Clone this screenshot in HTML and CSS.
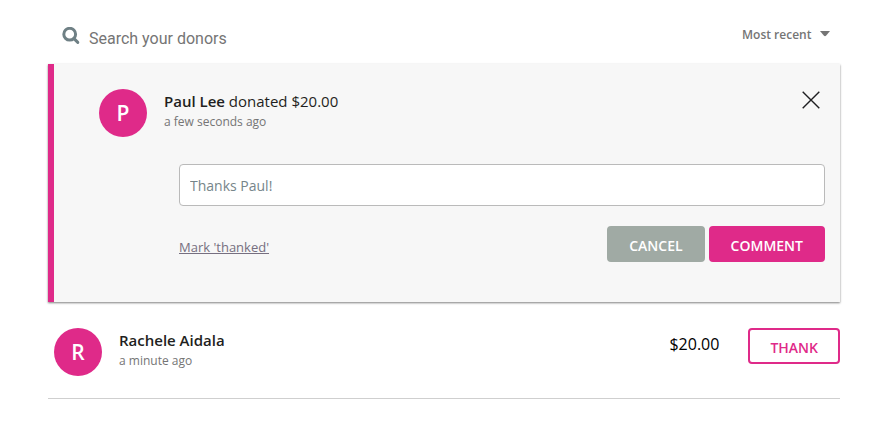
FILE: index.html
```html
<!DOCTYPE html>
<html lang="en">
<head>
<meta charset="utf-8">
<meta name="viewport" content="width=device-width, initial-scale=1">
<title>Donors</title>
<link rel="stylesheet" href="styles.css">
</head>
<body>
<main class="donors">
  <header class="toolbar">
    <label class="search">
      <svg class="search-icon" viewBox="0 0 18 18" aria-hidden="true"><circle cx="7.7" cy="7.2" r="5.9"/><path d="M12 11.6l3.8 3.8"/></svg>
      <input class="search-input" type="search" placeholder="Search your donors" aria-label="Search your donors">
    </label>
    <div class="sort">
      <select class="sort-select" aria-label="Sort donors"><option>Most recent</option></select>
      <svg class="sort-arrow" viewBox="0 0 10 6" aria-hidden="true"><path d="M0 0h10L6 4.8q-1 .9-2 0z"/></svg>
    </div>
  </header>

  <section class="card">
    <div class="card-head">
      <span class="avatar">P</span>
      <div class="who">
        <p class="title"><strong class="name">Paul Lee</strong> donated $20.00</p>
        <p class="time">a few seconds ago</p>
      </div>
      <button class="close" type="button" aria-label="Close">
        <svg class="close-icon" viewBox="0 0 18 18" aria-hidden="true"><path d="M.7.7l16.6 16.6M17.3.7L.7 17.3"/></svg>
      </button>
    </div>
    <form class="reply">
      <input class="reply-input" type="text" placeholder="Thanks Paul!" aria-label="Comment">
      <div class="actions">
        <a class="mark" href="#">Mark 'thanked'</a>
        <div class="buttons">
          <button class="btn btn-cancel" type="button">CANCEL</button>
          <button class="btn btn-primary" type="button">COMMENT</button>
        </div>
      </div>
    </form>
  </section>

  <article class="row">
    <span class="avatar">R</span>
    <div class="who">
      <p class="title"><strong class="name">Rachele Aidala</strong></p>
      <p class="time">a minute ago</p>
    </div>
    <span class="amount">$20.00</span>
    <button class="btn btn-outline" type="button">THANK</button>
  </article>
</main>
</body>
</html>
```
FILE: styles.css
```css
* {
  box-sizing: border-box;
}

body {
  margin: 0;
  background: #fff;
  color: #1f1f21;
  font-family: "Open Sans", "Noto Sans", sans-serif;
}

button,
input,
select {
  font-family: inherit;
}

p {
  margin: 0;
}

.donors {
  padding: 16px 56px 0 48px;
}

.toolbar {
  display: flex;
  justify-content: space-between;
  padding: 0 10px 0 14px;
  height: 48px;
}

.search {
  display: flex;
  flex: 1;
  gap: 9px;
}

.search-icon {
  width: 18px;
  height: 18px;
  margin-top: 11px;
  fill: none;
  stroke: #6f8085;
  stroke-width: 3;
  stroke-linecap: round;
}

.search-input {
  flex: 1;
  height: 44px;
  border: 0;
  padding: 0;
  background: none;
  font-family: Roboto, sans-serif;
  font-size: 16px;
  appearance: none;
  outline: none;
}

.search-input::placeholder {
  color: #757575;
}

.sort {
  display: flex;
  align-items: center;
  gap: 8px;
  height: 36px;
}

.sort-select {
  border: 0;
  padding: 0;
  background: none;
  color: #757575;
  font-size: 12px;
  font-weight: 600;
  appearance: none;
}

.sort-arrow {
  width: 10px;
  height: 6px;
  fill: #757575;
}

.card {
  padding: 25px 15px 40px 45px;
  border-left: 6px solid #df2a89;
  background: #f7f7f7;
  box-shadow: 0 1px 2px rgba(0, 0, 0, 0.5);
}

.card-head,
.row {
  display: flex;
  align-items: flex-start;
}

.avatar {
  width: 48px;
  height: 48px;
  border-radius: 50%;
  background: #df2a89;
  color: #fff;
  font-size: 21px;
  font-weight: 600;
  line-height: 48px;
  text-align: center;
}

.who {
  flex: 1;
  margin-left: 17px;
}

.title {
  font-size: 15px;
  line-height: 24px;
}

.name {
  font-weight: 600;
}

.time {
  color: #757575;
  font-size: 12px;
  line-height: 18px;
}

.close {
  display: flex;
  margin: 2px 5px 0 0;
  border: 0;
  padding: 0;
  background: none;
}

.close-icon {
  width: 18px;
  height: 18px;
  fill: none;
  stroke: #1f1f21;
  stroke-width: 1.4;
}

.reply {
  margin: 27px 0 0 80px;
}

.reply-input {
  display: block;
  width: 100%;
  height: 42px;
  padding: 0 10px;
  border: 1px solid #bababa;
  border-radius: 4px;
  background: #fff;
  font-size: 14px;
}

.reply-input::placeholder {
  color: #76858a;
}

.actions {
  display: flex;
  align-items: center;
  justify-content: space-between;
  margin-top: 20px;
}

.mark {
  padding-top: 6px;
  color: #766f80;
  font-size: 13px;
}

.buttons {
  display: flex;
  gap: 4px;
}

.btn {
  height: 36px;
  padding: 2px 20px 0;
  border: 2px solid transparent;
  border-radius: 4px;
  color: #fff;
  font-size: 14px;
  font-weight: 600;
}

.btn-cancel {
  border-color: #a0aaa4;
  background: #a0aaa4;
}

.btn-primary {
  border-color: #df2a89;
  background: #df2a89;
}

.btn-outline {
  border-color: #df2a89;
  background: #fff;
  color: #df2a89;
}

.row {
  padding: 26px 0 22px 6px;
  border-bottom: 1px solid #cfcfcf;
}

.amount {
  margin-right: 29px;
  color: #000;
  font-size: 16px;
  line-height: 32px;
}
```
